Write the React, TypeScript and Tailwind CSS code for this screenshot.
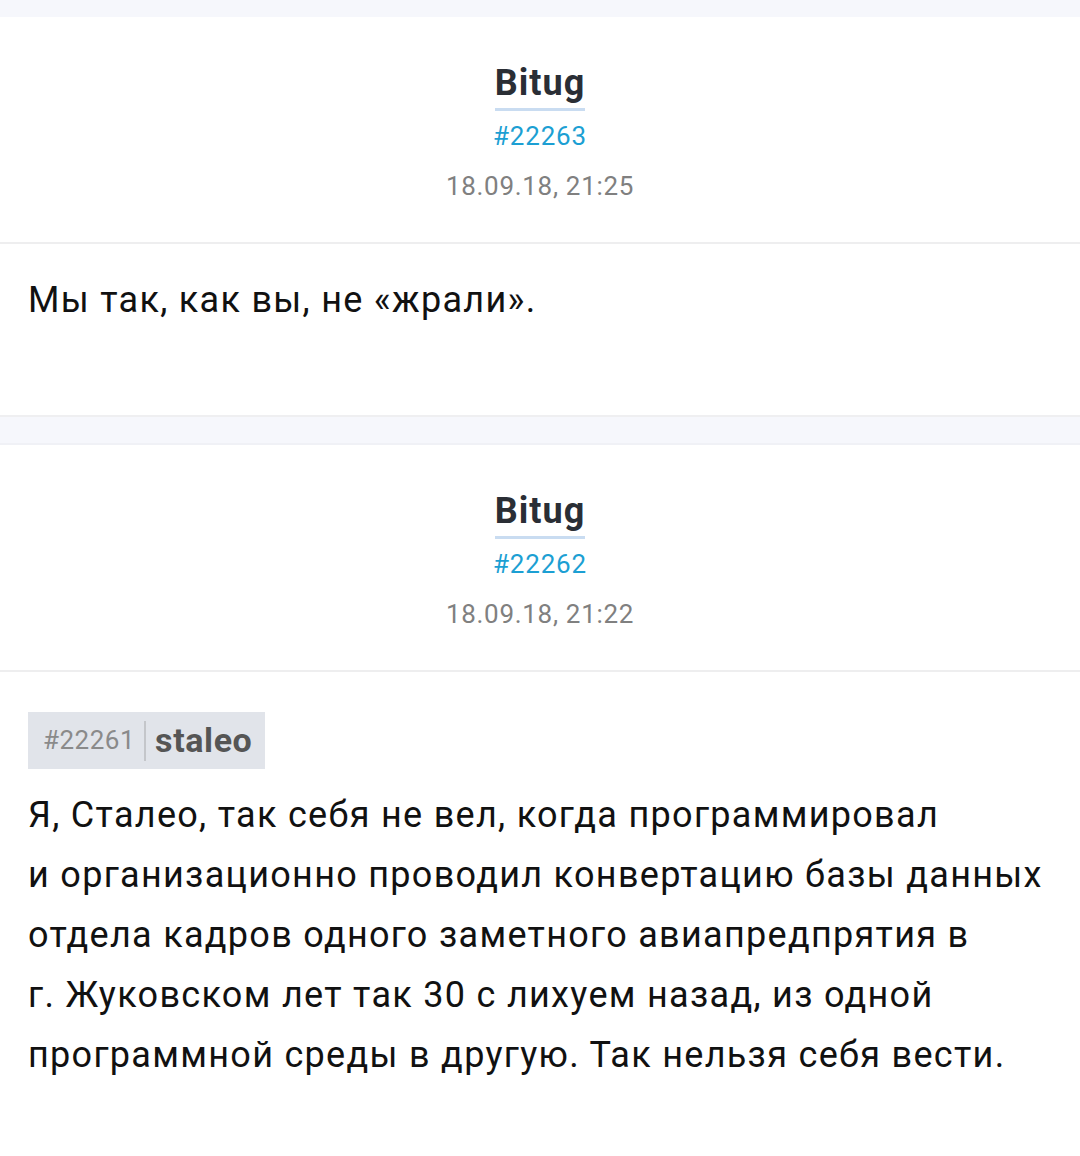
const font = { fontFamily: 'Roboto, "Noto Sans", sans-serif' };

type PostProps = {
  author: string;
  number: string;
  date: string;
  children: React.ReactNode;
  bodyClass: string;
};

function Post({ author, number, date, children, bodyClass }: PostProps) {
  return (
    <div className="bg-white">
      {/* Header */}
      <div className="flex flex-col items-center pt-[46px] pb-[40px] border-b-2 border-[#eeeeef]">
        <span className="text-[36px] leading-[40px] font-bold tracking-[1px] text-[#2a2e35] pb-[5px] border-b-[3px] border-[#c9dcf1]">
          {author}
        </span>
        <span className="mt-[9px] text-[26px] leading-[32px] tracking-[0.8px] text-[#1c9fd3]">{number}</span>
        <span className="mt-[18px] text-[26px] leading-[32px] tracking-[0.7px] text-[#808080]">{date}</span>
      </div>
      {/* Body */}
      <div className={bodyClass}>{children}</div>
    </div>
  );
}

export default function App() {
  return (
    <div style={font} className="min-h-[1156px] bg-white">
      <div className="h-[17px] bg-[#f6f7fc]" />
      <Post author="Bitug" number="#22263" date="18.09.18, 21:25" bodyClass="pt-[26px] pb-[85px] px-[28px] border-b-2 border-[#efeff1]">
        <p className="text-[36px] leading-[60px] tracking-[1.3px] text-[#111111]">Мы так, как вы, не «жрали».</p>
      </Post>
      <div className="h-[28px] bg-[#f6f7fc] border-b-2 border-[#f0f1f6]" />
      <Post author="Bitug" number="#22262" date="18.09.18, 21:22" bodyClass="pt-[40px] pb-[70px] px-[28px]">
        <div className="inline-flex items-center h-[57px] bg-[#e1e4ea] pl-[15px] pr-[13px]">
          <span className="text-[26px] tracking-[0.5px] text-[#8a8a8a]">#22261</span>
          <span className="mx-[9px] w-[2px] h-[40px] bg-[#c4c6ca]" />
          <span className="text-[34px] font-bold tracking-[0.6px] text-[#555555]">staleo</span>
        </div>
        <p className="mt-[16px] text-[36px] leading-[60px] tracking-[1.3px] text-[#111111]">
          Я, Сталео, так себя не вел, когда программировал
          <br />
          и организационно проводил конвертацию базы данных
          <br />
          отдела кадров одного заметного авиапредпрятия в
          <br />
          г. Жуковском лет так 30 с лихуем назад, из одной
          <br />
          программной среды в другую. Так нельзя себя вести.
        </p>
      </Post>
    </div>
  );
}
